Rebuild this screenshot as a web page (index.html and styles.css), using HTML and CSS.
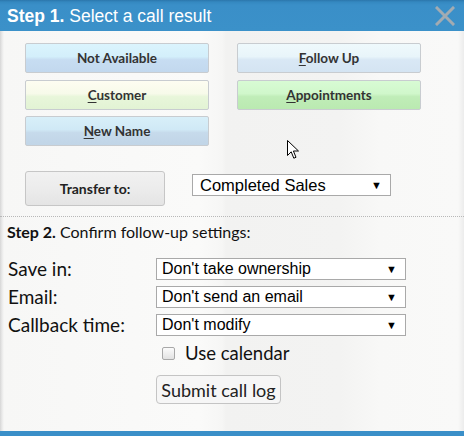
FILE: index.html
```html
<!DOCTYPE html>
<html>
<head>
<meta charset="utf-8">
<link rel="stylesheet" href="styles.css">
</head>
<body>
<div class="dialog">
  <div class="titlebar">
    <span class="title"><b>Step 1.</b> Select a call result</span>
    <svg class="close" width="20" height="20" viewBox="0 0 20 20"><path d="M2 2 L18 18 M18 2 L2 18" stroke="#a2abb2" stroke-width="3" stroke-linecap="square"/></svg>
  </div>
  <div class="body">
    <div class="results">
      <button class="btn na">Not Available</button>
      <button class="btn fu"><u>F</u>ollow Up</button>
      <button class="btn cu"><u>C</u>ustomer</button>
      <button class="btn ap"><u>A</u>ppointments</button>
      <button class="btn nn"><u>N</u>ew Name</button>
    </div>
    <div class="transfer">
      <button class="btn-transfer">Transfer to:</button>
      <div class="sel sel-transfer"><span>Completed Sales</span><span class="arrow">▼</span></div>
    </div>
    <div class="divider"></div>
    <div class="step2"><b>Step 2.</b> Confirm follow-up settings:</div>
    <div class="settings">
      <label class="lbl">Save in:</label>
      <div class="sel"><span>Don't take ownership</span><span class="arrow">▼</span></div>
      <label class="lbl">Email:</label>
      <div class="sel"><span>Don't send an email</span><span class="arrow">▼</span></div>
      <label class="lbl">Callback time:</label>
      <div class="sel"><span>Don't modify</span><span class="arrow">▼</span></div>
      <div class="check-row"><span class="check"></span><span>Use calendar</span></div>
      <div class="submit-row"><button class="submit">Submit call log</button></div>
    </div>
    <svg class="cursor" width="13" height="20" viewBox="0 0 13 20"><path d="M0.5 0.5 L0.5 15.5 L4.2 11.8 L6.8 18.2 L9 17.3 L6.4 11 L11.5 11 Z" fill="#fff" stroke="#000" stroke-width="1"/></svg>
  </div>
  <div class="bottombar"></div>
</div>
</body>
</html>
```

FILE: styles.css
```css
* { box-sizing: border-box; }
html, body { margin: 0; padding: 0; }
body { width: 464px; height: 436px; overflow: hidden; font-family: Lato, "Liberation Sans", sans-serif; }

.dialog {
  width: 464px; height: 436px;
  display: flex; flex-direction: column;
  background: linear-gradient(90deg, #d6d6d6 0, #e9e9e9 2px, #f7f7f6 4px, #fafaf9 200px, #f6f6f5 222px, #f2f2f1 226px, #f3f3f2 340px, #f8f8f7 380px, #f9f9f8 458px, #ececec 464px);
}

.titlebar {
  height: 31px; flex: none;
  display: flex; align-items: center; justify-content: space-between;
  padding: 0 9px 0 7px;
  background: linear-gradient(#2b76ab 0, #3488c0 2px, #3a8fc8 5px, #3b91c9 100%);
  color: #fff;
  font-family: "Liberation Sans", Arial, sans-serif;
  font-size: 17.5px;
}
.title { padding-top: 1px; }
.close { margin-top: 1px; }

.body { flex: 1; position: relative; }

.results {
  display: grid;
  grid-template-columns: 184px 184px;
  column-gap: 28px;
  row-gap: 6.5px;
  padding: 12px 0 0 25px;
}
.btn {
  height: 30px;
  border: 1px solid #c8ccd0;
  border-radius: 2px;
  font-family: Lato, sans-serif;
  font-weight: bold;
  font-size: 13.5px;
  color: #333;
  padding: 0;
}
.btn u { text-decoration-thickness: 1px; text-underline-offset: 2px; }
.na { background: linear-gradient(#dbf4fd 0, #d3effb 45%, #c7ddf2 56%, #c2d8ee 100%); }
.fu { background: linear-gradient(#eff9fc 0, #e8f5fa 45%, #d9e8f5 56%, #d4e4f2 100%); }
.cu { background: linear-gradient(#fdfdf1 0, #f7faea 45%, #e8f6da 56%, #e2f3d4 100%); }
.ap { background: linear-gradient(#d8fbd4 0, #d0f7cb 45%, #c0edb8 56%, #baeab1 100%); }
.nn { background: linear-gradient(#d8eff9 0, #d0e9f6 45%, #c6daeb 56%, #c1d5e7 100%); }

.transfer {
  display: flex; align-items: flex-start;
  padding: 25px 0 0 25px;
  gap: 27px;
}
.btn-transfer {
  width: 140px; height: 35px;
  border: 1px solid #c6c6c6; border-radius: 3px;
  background: linear-gradient(#f1f1f1 0, #ececec 50%, #e4e4e4 100%);
  font-family: Lato, sans-serif; font-weight: bold; font-size: 14px; color: #222;
}
.sel {
  height: 22px;
  display: flex; align-items: center; justify-content: space-between;
  background: #fff;
  border: 1px solid #a9a9a9;
  font-family: "Liberation Sans", Arial, sans-serif;
  font-size: 16px; color: #000;
  padding: 0 8px 0 5px;
}
.sel .arrow { font-size: 11px; }
.sel-transfer { width: 199px; margin-top: 3px; font-size: 16.5px; padding-left: 7px; }

.divider { border-top: 1px dotted #b8b8b8; margin-top: 10px; }

.step2 {
  padding: 5px 0 0 7px;
  font-size: 16px; color: #111;
}

.settings {
  display: grid;
  grid-template-columns: 148px 250px;
  row-gap: 6px;
  padding: 17px 0 0 8px;
  color: #111;
}
.lbl { font-size: 19px; line-height: 22px; }
.check-row {
  grid-column: 2;
  display: flex; align-items: center; gap: 10px;
  padding-left: 6px; margin-top: 1px;
  font-size: 18.5px; line-height: 20px;
}
.check {
  width: 13px; height: 13px;
  border: 1px solid #a8a8a8; border-radius: 2px;
  background: linear-gradient(#fbfbfb, #e2e2e2);
}
.submit-row { grid-column: 2; padding-top: 6px; }
.submit {
  width: 125px; height: 29px;
  border: 1px solid #c4c4c4; border-radius: 4px;
  background: #f6f6f6;
  font-family: Lato, sans-serif; font-size: 18px; color: #222;
  padding: 0;
}

.cursor { position: absolute; left: 287px; top: 109px; }

.bottombar { height: 5px; flex: none; background: #3a8fc8; }
```
